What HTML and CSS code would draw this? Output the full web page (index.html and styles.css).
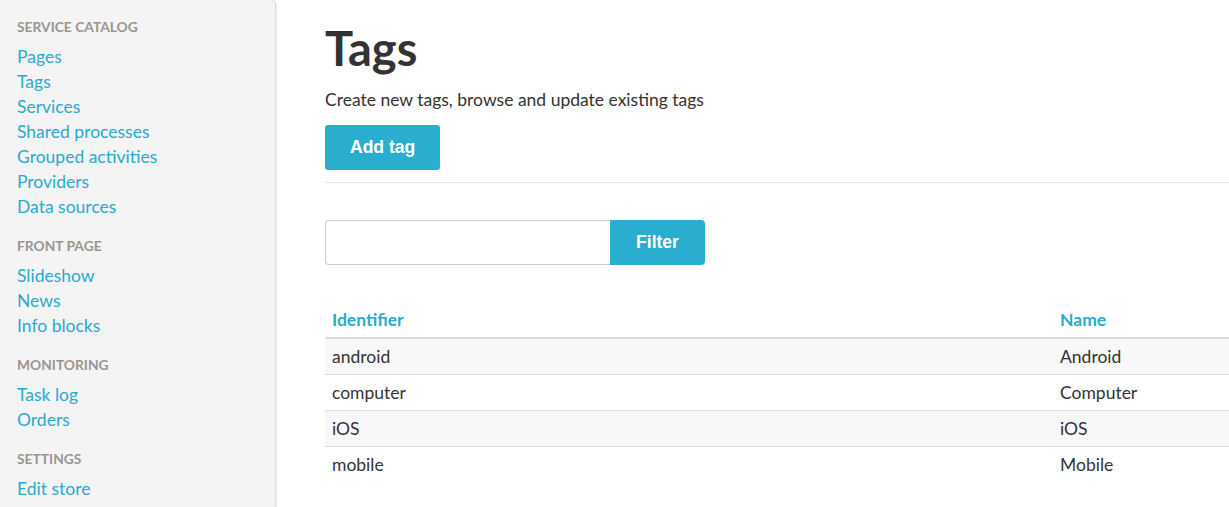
FILE: index.html
```html
<!DOCTYPE html>
<html lang="en">
<head>
  <meta charset="UTF-8" />
  <title>Tags</title>
  <link rel="stylesheet" href="styles.css">
</head>
<body>
  <div class="layout">
    <nav class="sidebar">
      <h4>Service catalog</h4>
      <a href="#">Pages</a>
      <a href="#">Tags</a>
      <a href="#">Services</a>
      <a href="#">Shared processes</a>
      <a href="#">Grouped activities</a>
      <a href="#">Providers</a>
      <a href="#">Data sources</a>
      <h4>Front page</h4>
      <a href="#">Slideshow</a>
      <a href="#">News</a>
      <a href="#">Info blocks</a>
      <h4>Monitoring</h4>
      <a href="#">Task log</a>
      <a href="#">Orders</a>
      <h4>Settings</h4>
      <a href="#">Edit store</a>
      <a href="#">Roles</a>
    </nav>

    <main class="content">
      <h1>Tags</h1>
      <p class="lead">Create new tags, browse and update existing tags</p>
      <button class="btn">Add tag</button>
      <hr />

      <form class="filter">
        <input type="text" />
        <button class="btn" type="submit">Filter</button>
      </form>

      <table class="tags">
        <thead>
          <tr><th><a href="#">Identifier</a></th><th><a href="#">Name</a></th></tr>
        </thead>
        <tbody>
          <tr><td>android</td><td>Android</td></tr>
          <tr><td>computer</td><td>Computer</td></tr>
          <tr><td>iOS</td><td>iOS</td></tr>
          <tr><td>mobile</td><td>Mobile</td></tr>
        </tbody>
      </table>
    </main>
  </div>
</body>
</html>
```

FILE: styles.css
```css
/* admin layout: sidebar + content */
html, body {
  margin: 0; padding: 0;
  height: 100%;
  overflow: hidden;
  background: #fff;
  color: #333;
  font-family: Lato, 'Open Sans', sans-serif;
  font-size: 17.5px;
}
.layout {
  display: flex;
  height: 100%;
}
.sidebar {
  width: 258px;
  flex-shrink: 0;
  background: #f4f4f4;
  border-right: 1px solid #dcdcdc;
  border-top-right-radius: 5px;
  box-shadow: 1px 0 2px rgb(0 0 0 / 0.08);
  padding: 14px 0 0 17px;
  display: flex;
  flex-direction: column;
  align-items: flex-start;
}
.sidebar h4 {
  margin: 17px 0 7px;
  font-size: 13.8px;
  font-weight: 700;
  text-transform: uppercase;
  color: #9a9491;
  line-height: 20px;
}
.sidebar h4:first-child {
  margin-top: 3px;
}
.sidebar a {
  color: #2aaacf;
  text-decoration: none;
  line-height: 25px;
}
.content {
  flex-grow: 1;
  padding: 0 0 0 49px;
  min-width: 0;
  overflow: hidden;
}
h1 {
  margin: 17px 0 0;
  font-size: 47px;
  font-weight: 700;
  line-height: 62px;
  color: #333;
}
.lead {
  margin: 10px 0 14px;
  line-height: 22px;
}
.btn {
  background: #2aaecf;
  color: #fff;
  border: none;
  border-radius: 3px;
  font-family: 'Liberation Sans', Arial, sans-serif;
  font-weight: 700;
  font-size: 17.5px;
  height: 45px;
  padding: 0 25px;
  cursor: pointer;
}
hr {
  border: none;
  border-top: 1px solid #e6e6e6;
  margin: 12px 0 37px;
}
.filter {
  display: flex;
}
.filter input {
  width: 285px;
  height: 45px;
  box-sizing: border-box;
  border: 1px solid #ccc;
  border-right: none;
  border-radius: 4px 0 0 4px;
  padding: 0 10px;
  font: inherit;
  outline: none;
}
.filter .btn {
  border-radius: 0 4px 4px 0;
  width: 95px;
  padding: 0;
}
.tags {
  margin-top: 37px;
  width: 1100px;
  border-collapse: collapse;
}
.tags th {
  text-align: left;
  font-weight: 700;
  padding: 0 7px;
  height: 35px;
  border-bottom: 2px solid #ddd;
}
.tags th:first-child { width: 714px; }
.tags th a {
  color: #2aaacf;
  text-decoration: none;
}
.tags td {
  padding: 0 7px;
  height: 35px;
  border-bottom: 1px solid #ddd;
  color: #333;
}
.tags tbody tr:nth-child(odd) {
  background: #f8f8f8;
}
.tags tbody tr:last-child td {
  border-bottom: none;
}
```
